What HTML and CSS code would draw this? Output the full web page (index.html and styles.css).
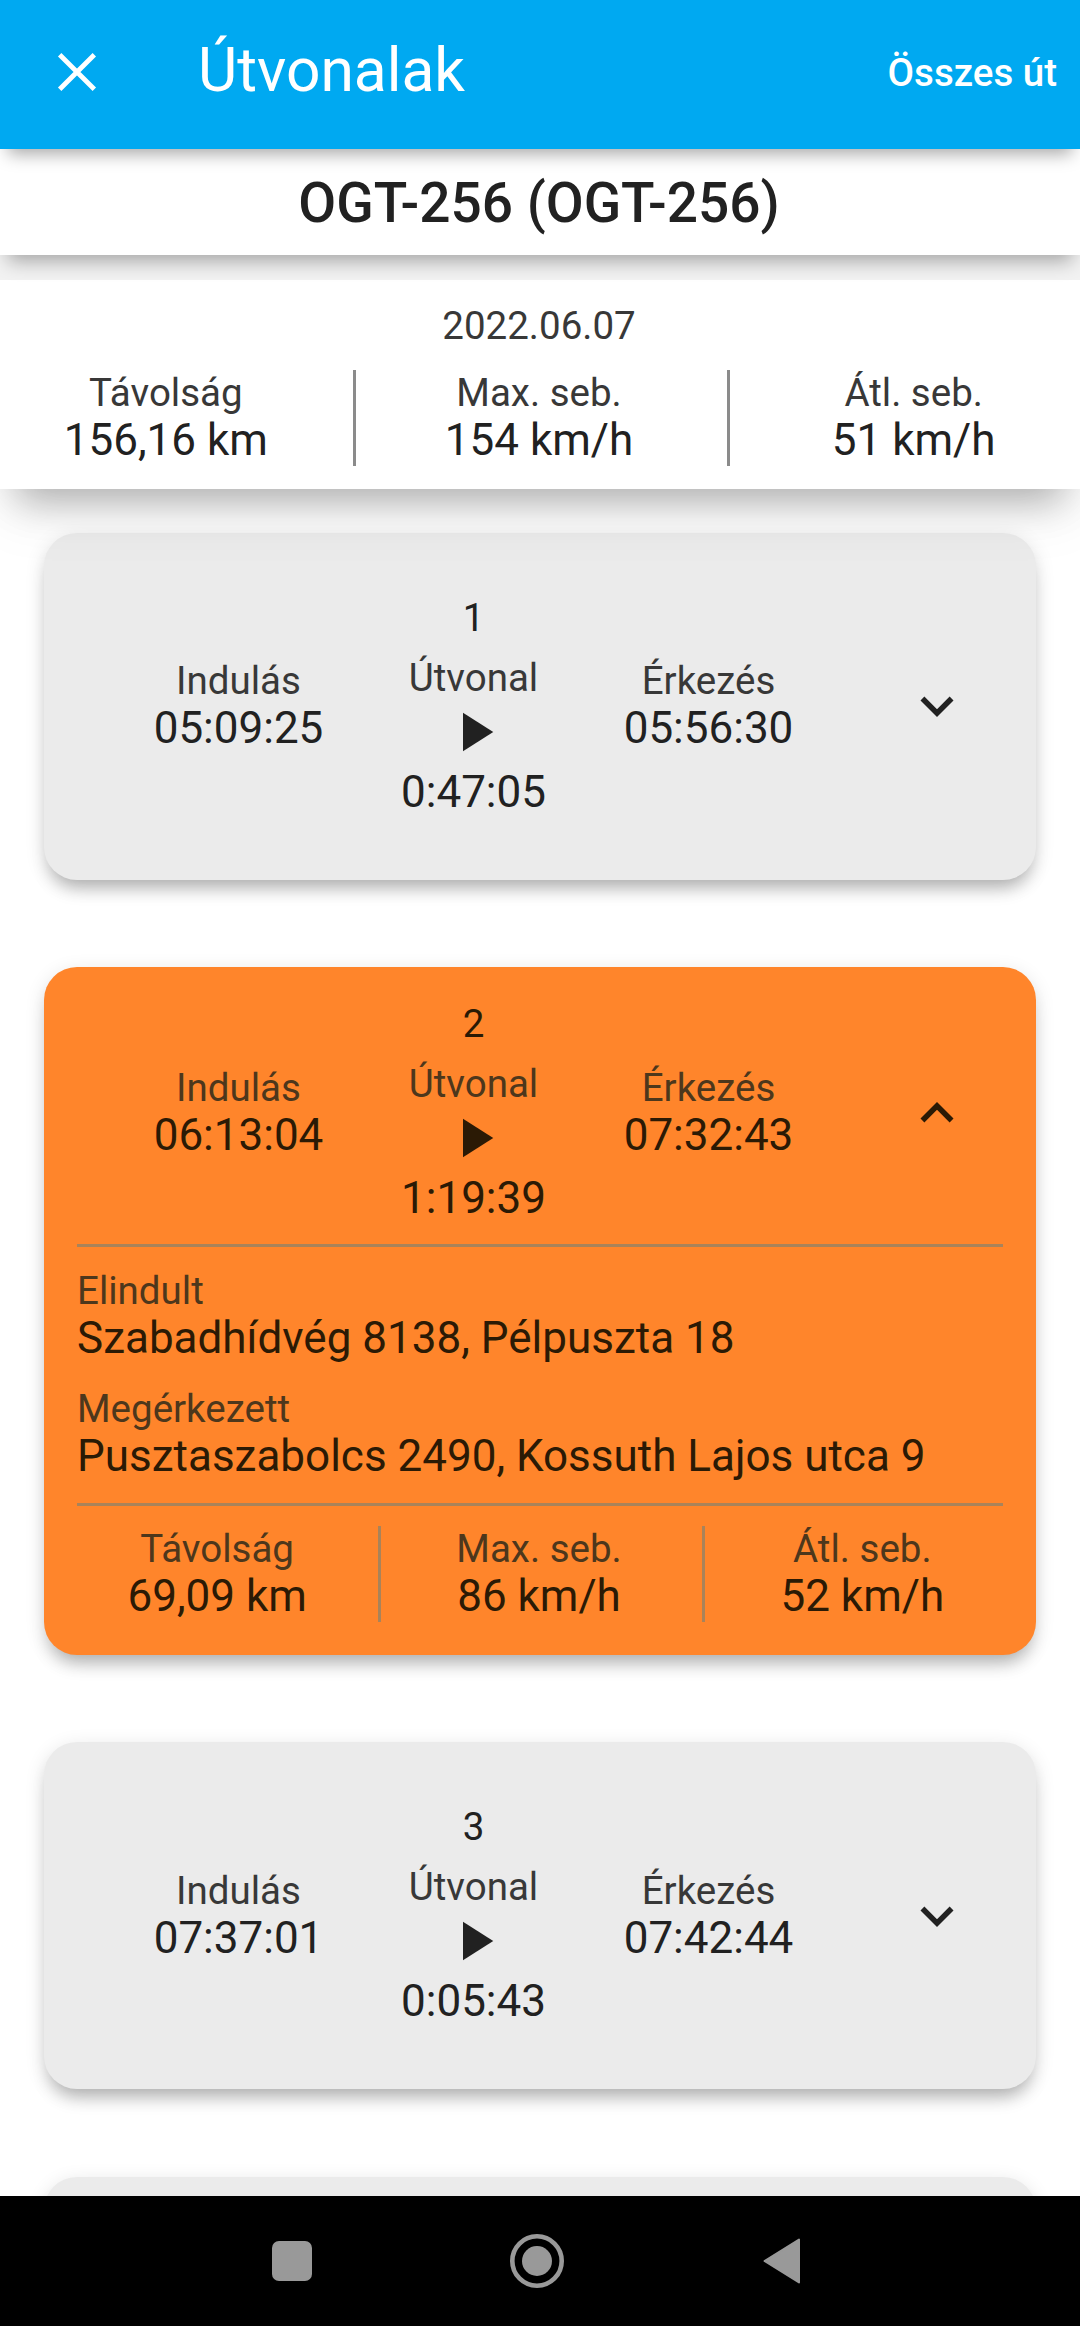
FILE: index.html
```html
<!DOCTYPE html>
<html lang="hu">
<head>
  <meta charset="UTF-8" />
  <meta name="viewport" content="width=device-width, initial-scale=1" />
  <title>Útvonalak</title>
  <link rel="stylesheet" href="styles.css">
</head>
<body>

<div class="app">
  <header class="topbar">
    <svg class="icon close" viewBox="0 0 24 24"><path d="M5.7 5.7L18.3 18.3M18.3 5.7L5.7 18.3"/></svg>
    <h1>Útvonalak</h1>
    <a class="all-routes">Összes út</a>
  </header>

  <h2 class="vehicle">OGT-256 (OGT-256)</h2>

  <section class="summary">
    <div class="date">2022.06.07</div>
    <div class="stats">
      <div class="stat"><div class="label">Távolság</div><div class="value">156,16 km</div></div>
      <div class="stat"><div class="label">Max. seb.</div><div class="value">154 km/h</div></div>
      <div class="stat"><div class="label">Átl. seb.</div><div class="value">51 km/h</div></div>
    </div>
  </section>

  <main class="routes">
    <article class="card">
      <div class="card-head">
        <div class="col"><div class="label">Indulás</div><div class="value">05:09:25</div></div>
        <div class="col">
          <div class="number">1</div>
          <div class="label">Útvonal</div>
          <svg class="icon play" viewBox="0 0 24 24"><path d="M8 5v14l11-7z"/></svg>
          <div class="value">0:47:05</div>
        </div>
        <div class="col"><div class="label">Érkezés</div><div class="value">05:56:30</div></div>
        <svg class="icon chevron" viewBox="0 0 24 24"><path d="M16.59 8.59L12 13.17 7.41 8.59 6 10l6 6 6-6z"/></svg>
      </div>
    </article>

    <article class="card open">
      <div class="card-head">
        <div class="col"><div class="label">Indulás</div><div class="value">06:13:04</div></div>
        <div class="col">
          <div class="number">2</div>
          <div class="label">Útvonal</div>
          <svg class="icon play" viewBox="0 0 24 24"><path d="M8 5v14l11-7z"/></svg>
          <div class="value">1:19:39</div>
        </div>
        <div class="col"><div class="label">Érkezés</div><div class="value">07:32:43</div></div>
        <svg class="icon chevron" viewBox="0 0 24 24"><path d="M12 8l-6 6 1.41 1.41L12 10.83l4.59 4.58L18 14z"/></svg>
      </div>
      <div class="places">
        <div class="place"><div class="label">Elindult</div><div class="value">Szabadhídvég 8138, Pélpuszta 18</div></div>
        <div class="place"><div class="label">Megérkezett</div><div class="value">Pusztaszabolcs 2490, Kossuth Lajos utca 9</div></div>
      </div>
      <div class="stats">
        <div class="stat"><div class="label">Távolság</div><div class="value">69,09 km</div></div>
        <div class="stat"><div class="label">Max. seb.</div><div class="value">86 km/h</div></div>
        <div class="stat"><div class="label">Átl. seb.</div><div class="value">52 km/h</div></div>
      </div>
    </article>

    <article class="card">
      <div class="card-head">
        <div class="col"><div class="label">Indulás</div><div class="value">07:37:01</div></div>
        <div class="col">
          <div class="number">3</div>
          <div class="label">Útvonal</div>
          <svg class="icon play" viewBox="0 0 24 24"><path d="M8 5v14l11-7z"/></svg>
          <div class="value">0:05:43</div>
        </div>
        <div class="col"><div class="label">Érkezés</div><div class="value">07:42:44</div></div>
        <svg class="icon chevron" viewBox="0 0 24 24"><path d="M16.59 8.59L12 13.17 7.41 8.59 6 10l6 6 6-6z"/></svg>
      </div>
    </article>

    <article class="card"></article>
  </main>

  <nav class="navbar">
    <svg viewBox="0 0 60 60"><rect x="10" y="10" width="40" height="40" rx="7"/></svg>
    <svg viewBox="0 0 60 60"><circle class="ring" cx="30" cy="30" r="24.7"/><circle cx="30" cy="30" r="15"/></svg>
    <svg viewBox="0 0 60 60"><path class="back" d="M12.5 30L47 8.500V51.500z"/></svg>
  </nav>
</div>

</body>
</html>
```
FILE: styles.css
```css
* {
  box-sizing: border-box;
}
body {
  margin: 0;
  font-family: Roboto, "Liberation Sans", sans-serif;
  background: #fff;
  color: #212121;
}
.app {
  display: flex;
  flex-direction: column;
  width: 1080px;
  height: 2326px;
  overflow: hidden;
}
.icon {
  display: block;
  width: 66px;
  height: 66px;
  fill: currentColor;
}

/* header */
.topbar {
  display: flex;
  align-items: center;
  flex: none;
  height: 149px;
  padding: 0 23px 5px 44px;
  background: #00a9f1;
  color: #fff;
  z-index: 3;
  box-shadow: 0 13px 16px -8px rgba(0,0,0,0.34);
}
.close {
  fill: none;
  stroke: currentColor;
  stroke-width: 1.75;
}
.topbar h1 {
  flex: 1;
  margin: 0 0 4px 88px;
  font-size: 60.5px;
  font-weight: 400;
  line-height: 71px;
}
.all-routes {
  font-size: 38.5px;
  font-weight: 500;
}
.vehicle {
  flex: none;
  height: 106px;
  margin: 0;
  padding: 1px 2px 0 0;
  background: #fff;
  font-size: 55px;
  font-weight: 500;
  line-height: 107px;
  text-align: center;
  z-index: 2;
  box-shadow: 0 14px 18px -8px rgba(0,0,0,0.32), 0 25px #f2f2f2;
}

/* daily summary */
.summary {
  flex: none;
  height: 209px;
  margin-top: 25px;
  padding-top: 23px;
  background: #fff;
  z-index: 1;
  box-shadow: 0 30px 34px -18px rgba(0,0,0,0.25), 0 20px 60px -4px rgba(0,0,0,0.1);
}
.date {
  margin-bottom: 21px;
  padding-right: 2px;
  color: #383838;
  font-size: 38.5px;
  line-height: 46px;
  text-align: center;
}
.stats {
  display: grid;
  grid-template-columns: repeat(3, 1fr);
  margin: 0 -22px;
}
.stat {
  padding-left: 1px;
  text-align: center;
}
.stat + .stat {
  padding: 0 5px 0 0;
  border-left: 3px solid #8b8b8b;
}
.label {
  color: #383838;
  font-size: 38.5px;
  line-height: 45px;
}
.value {
  font-size: 44px;
  line-height: 51px;
  white-space: nowrap;
}

/* route cards */
.routes {
  display: flex;
  flex-direction: column;
  flex: 1;
  min-height: 0;
  gap: 87.7px;
  padding: 43.5px 44px 0;
  overflow: hidden;
}
.card {
  display: flex;
  flex-direction: column;
  justify-content: center;
  flex: none;
  height: 347px;
  padding: 0 33px;
  border-radius: 33px;
  background: #ebebeb;
  box-shadow: 0 14px 18px -7px rgba(0,0,0,0.26), 0 5px 20px rgba(0,0,0,0.12);
}
.card-head {
  display: flex;
  align-items: center;
  padding: 0 33px 0 44px;
}
.col {
  display: flex;
  flex-direction: column;
  align-items: center;
  width: 235px;
}
.number {
  margin-bottom: 15px;
  font-size: 38.5px;
  line-height: 45px;
}
.play {
  margin: -1px 0 2px;
}
.chevron {
  margin-left: auto;
}
.card.open {
  display: block;
  height: 687.5px;
  padding-top: 34px;
  background: #ff852b;
  color: #2b1a05;
}
.open .label {
  color: #4d371c;
}
.places {
  display: flex;
  flex-direction: column;
  gap: 22px;
  margin: 20px 0;
  padding: 21px 0 20.5px;
  border-top: 3px solid #a9835a;
  border-bottom: 3px solid #a9835a;
}
.open .stat + .stat {
  border-left-color: #a9835a;
}

/* system navigation */
.navbar {
  display: flex;
  align-items: center;
  justify-content: center;
  flex: none;
  gap: 185px;
  height: 130px;
  padding-right: 7px;
  background: #000;
}
.navbar svg {
  width: 60px;
  height: 60px;
  fill: #999;
}
.navbar .ring {
  fill: none;
  stroke: #999;
  stroke-width: 4.6;
}
.navbar .back {
  stroke: #999;
  stroke-width: 2;
  stroke-linejoin: round;
}
```
